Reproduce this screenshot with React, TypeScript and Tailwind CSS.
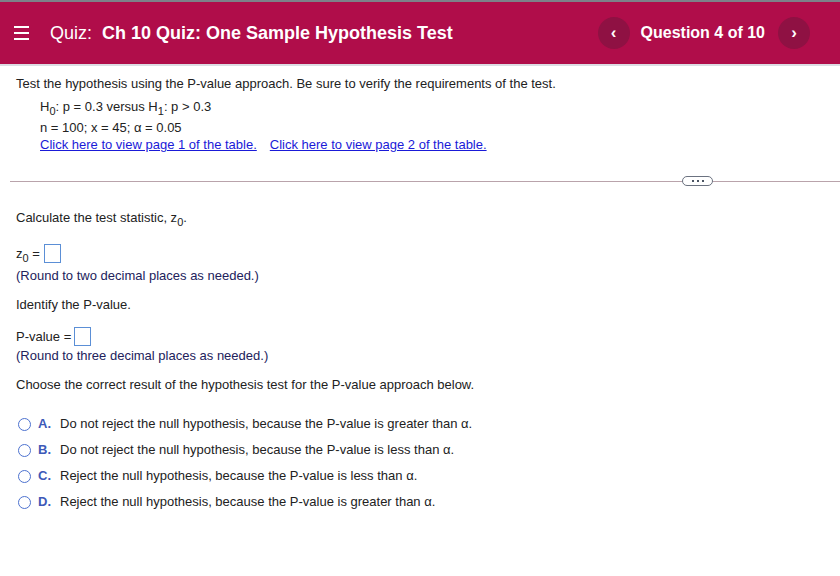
import React from 'react';

const options = [
  { key: 'A.', text: 'Do not reject the null hypothesis, because the P-value is greater than α.' },
  { key: 'B.', text: 'Do not reject the null hypothesis, because the P-value is less than α.' },
  { key: 'C.', text: 'Reject the null hypothesis, because the P-value is less than α.' },
  { key: 'D.', text: 'Reject the null hypothesis, because the P-value is greater than α.' },
];

function Sub({ children }: { children: React.ReactNode }) {
  return <span className="text-[11px] relative top-[4px] align-baseline leading-none">{children}</span>;
}

function AnswerBox() {
  return <span className="inline-block w-[17px] h-[19px] border border-[#5b8fd6] bg-white align-middle" />;
}

export default function App() {
  return <div className="w-[840px] h-[576px] bg-white text-[#222] overflow-hidden" style={{ fontFamily: '"Liberation Sans", Arial, sans-serif' }}>
    <div className="h-[2px] bg-[#7d8189]" />
    <header className="h-[62px] bg-[#b00d4a] flex items-center text-white border-b-2 border-[#dcdce3] box-content">
      <div className="ml-[14px] w-[15px] flex flex-col gap-[4px]">
        <span className="h-[2px] bg-white" />
        <span className="h-[2px] bg-white" />
        <span className="h-[2px] bg-white" />
      </div>
      <div className="ml-[21px] text-[18px] leading-none">Quiz:&nbsp; <span className="font-bold">Ch 10 Quiz: One Sample Hypothesis Test</span></div>
      <div className="ml-auto mr-[30px] flex items-center">
        <button className="w-[32px] h-[32px] rounded-full bg-[#8f1143] flex items-center justify-center text-white text-[17px] leading-none font-bold pb-[2px]">‹</button>
        <span className="ml-[11px] mr-[13px] text-[16px] font-bold">Question 4 of 10</span>
        <button className="w-[32px] h-[32px] rounded-full bg-[#8f1143] flex items-center justify-center text-white text-[17px] leading-none font-bold pb-[2px]">›</button>
      </div>
    </header>

    <div className="pl-[16px] text-[13px]">
      <div className="mt-[10px] leading-[15px]">Test the hypothesis using the P-value approach. Be sure to verify the requirements of the test.</div>
      <div className="pl-[24px]">
        <div className="mt-[8px] leading-[15px]">H<Sub>0</Sub>: p = 0.3 versus H<Sub>1</Sub>: p &gt; 0.3</div>
        <div className="mt-[6px] leading-[15px]">n = 100; x = 45; α = 0.05</div>
        <div className="mt-[2px] leading-[15px] flex gap-[13px] text-[#1a1ad8]">
          <a className="underline">Click here to view page 1 of the table.</a>
          <a className="underline">Click here to view page 2 of the table.</a>
        </div>
      </div>
    </div>

    <div className="relative mt-[29px] ml-[10px] h-px bg-[#b9a3ab]">
      <div className="absolute left-[672px] top-[-5px] w-[31px] h-[10px] rounded-full border border-[#6b7280] bg-white flex items-center justify-center gap-[3px]">
        <span className="w-[2px] h-[2px] bg-[#4b5563]" />
        <span className="w-[2px] h-[2px] bg-[#4b5563]" />
        <span className="w-[2px] h-[2px] bg-[#4b5563]" />
      </div>
    </div>

    <div className="pl-[16px] text-[13px]">
      <div className="mt-[28px] leading-[15px]">Calculate the test statistic, z<Sub>0</Sub>.</div>
      <div className="mt-[19px] h-[19px] flex items-center gap-[4px]">
        <span className="leading-[15px]">z<Sub>0</Sub> =</span><AnswerBox />
      </div>
      <div className="mt-[5px] leading-[15px] text-[#22225c]">(Round to two decimal places as needed.)</div>
      <div className="mt-[14px] leading-[15px]">Identify the P-value.</div>
      <div className="mt-[15px] h-[19px] flex items-center gap-[3px]">
        <span>P-value =</span><AnswerBox />
      </div>
      <div className="mt-[2px] leading-[15px] text-[#22225c]">(Round to three decimal places as needed.)</div>
      <div className="mt-[14px] leading-[15px]">Choose the correct result of the hypothesis test for the P-value approach below.</div>
      <div className="mt-[19px] flex flex-col">
        {options.map((o) => <div key={o.key} className="h-[26px] flex items-center">
          <span className="ml-[2px] w-[13px] h-[13px] rounded-full border-[1.5px] border-[#4d72cf]" />
          <span className="ml-[7px] w-[22px] font-bold text-[#3d59b8]">{o.key}</span>
          <span>{o.text}</span>
        </div>)}
      </div>
    </div>
  </div>;
}
